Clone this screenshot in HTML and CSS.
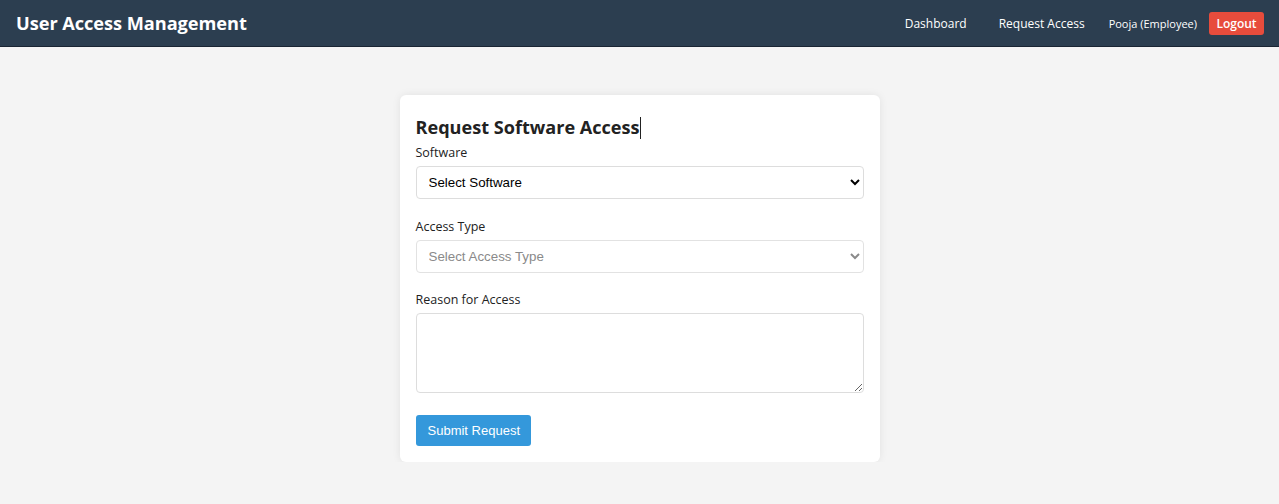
FILE: index.html
```html
<!DOCTYPE html>
<html>
<head>
<meta charset="utf-8">
<link rel="stylesheet" href="styles.css">
</head>
<body>
<header class="navbar">
  <div class="brand">User Access Management</div>
  <nav class="nav">
    <a class="nav-link" href="#">Dashboard</a>
    <a class="nav-link" href="#">Request Access</a>
    <span class="user">Pooja (Employee)</span>
    <button class="logout">Logout</button>
  </nav>
</header>
<main class="main">
  <form class="card">
    <h2 class="title">Request Software Access<span class="caret"></span></h2>
    <label class="label">Software</label>
    <select class="field select"><option>Select Software</option></select>
    <label class="label">Access Type</label>
    <select class="field select select-off" disabled><option>Select Access Type</option></select>
    <label class="label">Reason for Access</label>
    <textarea class="field textarea"></textarea>
    <button type="button" class="submit">Submit Request</button>
  </form>
</main>
</body>
</html>
```
FILE: styles.css
```css
* { box-sizing: border-box; }
html, body { margin: 0; padding: 0; }
body {
  background: #f4f4f4;
  font-family: "Open Sans", "Noto Sans", sans-serif;
  color: #222;
}
.navbar {
  height: 47px;
  background: #2c3e50;
  border-bottom: 1px solid #1a2533;
  display: flex;
  align-items: center;
  justify-content: space-between;
  padding: 0 15px 0 16px;
}
.brand {
  color: #fff;
  font-weight: 700;
  font-size: 18.2px;
  letter-spacing: -0.05px;
}
.nav {
  display: flex;
  align-items: center;
}
.nav-link {
  color: #fff;
  text-decoration: none;
  font-size: 12px;
  margin-right: 32px;
}
.nav-link + .nav-link { margin-right: 24px; }
.user {
  color: #fff;
  font-size: 11px;
  margin-right: 12px;
}
.logout {
  background: #e74c3c;
  color: #fff;
  border: none;
  border-radius: 3px;
  font-family: "Open Sans", "Noto Sans", sans-serif;
  font-size: 12px;
  font-weight: 600;
  height: 23px;
  width: 55px;
  padding: 0;
  cursor: pointer;
}
.main {
  display: flex;
  justify-content: center;
  padding-top: 48px;
}
.card {
  width: 480px;
  background: #fff;
  border-radius: 6px;
  box-shadow: 0 0 8px rgba(0,0,0,0.08);
  padding: 16px;
  display: flex;
  flex-direction: column;
  align-items: flex-start;
}
.title {
  margin: 0;
  font-size: 18.1px;
  font-weight: 700;
  line-height: 32px;
  color: #222;
}
.caret {
  display: inline-block;
  width: 1px;
  height: 22px;
  background: #222;
  vertical-align: -5px;
}
.label {
  display: block;
  font-size: 12.5px;
  line-height: 18px;
  padding-top: 1px;
  margin-bottom: 4px;
  color: #222;
}
.field {
  width: 100%;
  border: 1px solid #ddd;
  border-radius: 4px;
  background: #fff;
  font-family: "Liberation Sans", Arial, sans-serif;
  font-size: 13.33px;
}
.select {
  height: 33px;
  padding: 0 8px;
  margin-bottom: 17.5px;
  color: #000;
}
.select-off {
  opacity: 1;
  color: #8a8a8a;
  border-color: #e2e2e2;
}
.textarea {
  height: 80px;
  margin-bottom: 22px;
  resize: vertical;
}
.submit {
  background: #3498db;
  color: #fff;
  border: none;
  border-radius: 3px;
  height: 31px;
  width: 115px;
  padding: 0 0 0 12px;
  text-align: left;
  font-family: "Liberation Sans", Arial, sans-serif;
  font-size: 13px;
}
```
